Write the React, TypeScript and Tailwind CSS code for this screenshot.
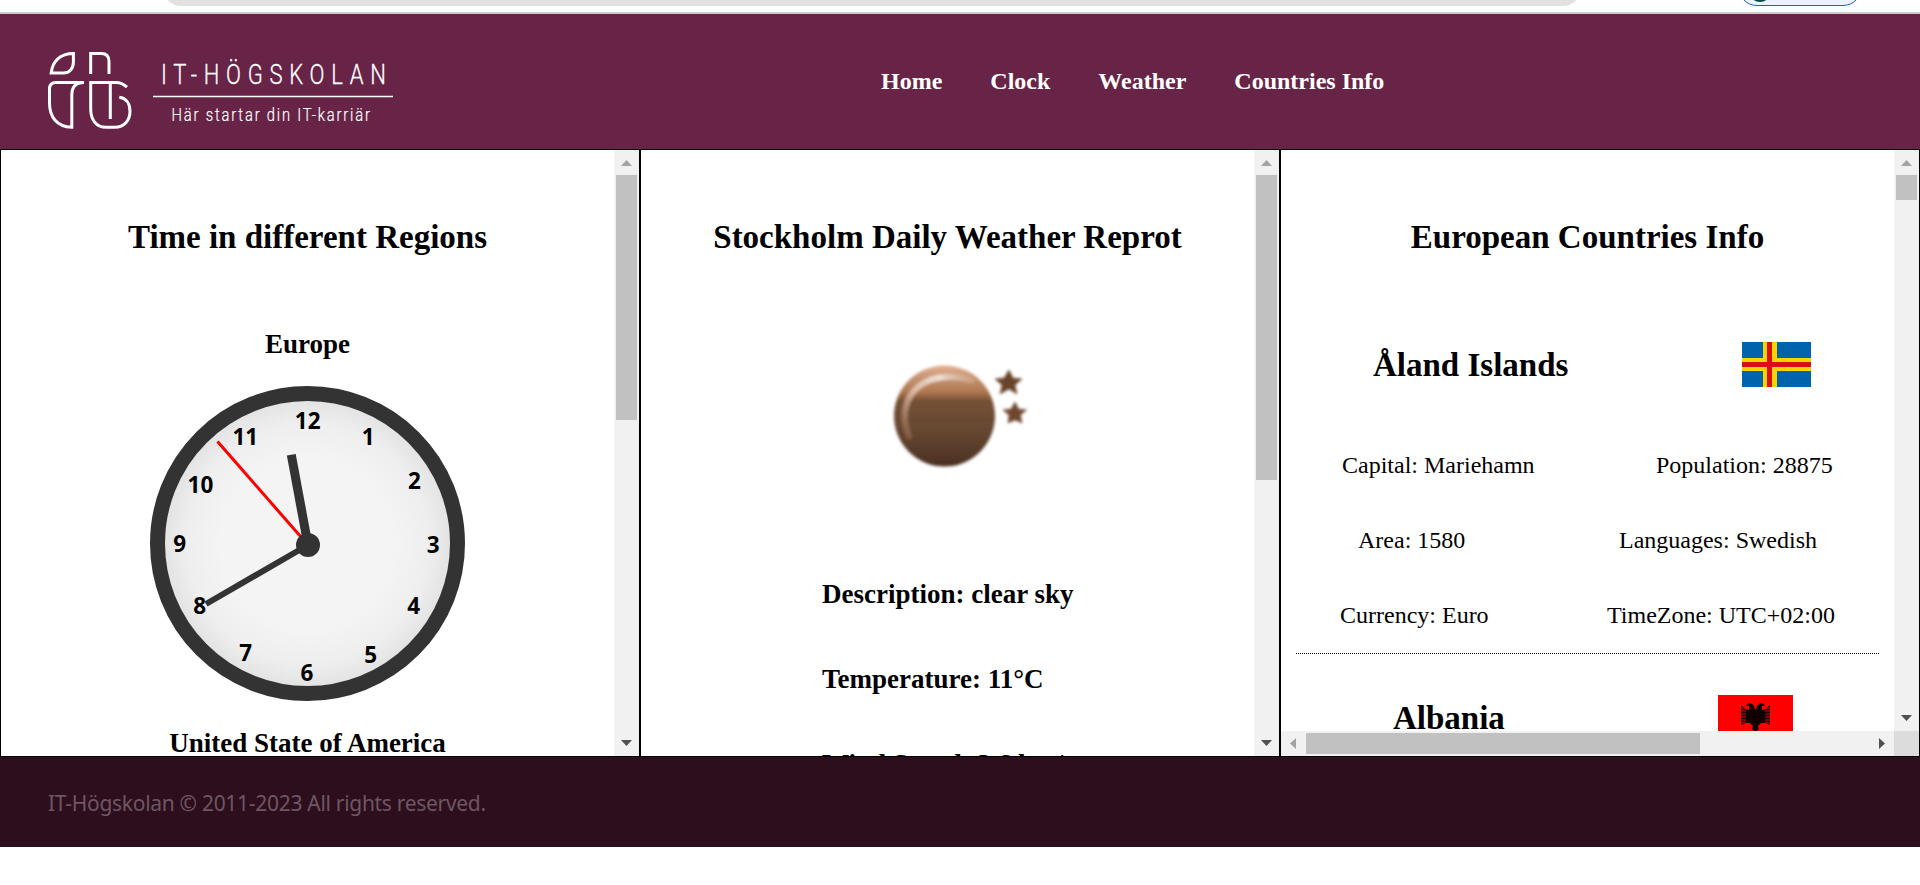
import React from 'react';

const SERIF = "font-['Liberation_Serif','Times_New_Roman',serif]";

type Direction = 'up' | 'down' | 'left' | 'right';

const arrows: Record<Direction, string> = {
  up: '7,16 18,16 12.5,10',
  down: '7,9 18,9 12.5,15',
  left: '15,7 15,18 9,12.5',
  right: '10,7 10,18 16,12.5',
};

function Arrow({ dir, muted = false }: { dir: Direction; muted?: boolean }) {
  return (
    <svg className="block h-[25px] w-[25px] shrink-0" viewBox="0 0 25 25">
      <polygon points={arrows[dir]} fill={muted ? '#a3a3a3' : '#505050'} />
    </svg>
  );
}

function VScroll({ thumb }: { thumb: string }) {
  return (
    <div className="flex w-[25px] shrink-0 flex-col items-center bg-[#f1f1f1]">
      <Arrow dir="up" muted />
      <div className={`w-[21px] bg-[#c1c1c1] ${thumb}`} />
      <div className="grow" />
      <Arrow dir="down" />
    </div>
  );
}

function Logo() {
  return (
    <svg className="block h-[90px] w-[360px]" viewBox="40 45 360 90" fill="none" stroke="#fff" strokeWidth="3">
      <path d="M51.2 73 C52.5 61.5 60 53.5 73.4 53.5 V62 C73.4 68.5 69.5 73 63.5 73 Z" />
      <path d="M90.7 74 V53.5 H101.5 C106.5 53.5 109 56.5 109 61.5 V74" />
      <path d="M84 82.4 H56 C51.5 82.4 49.5 84.5 49.5 89 V103 C49.5 117 57 127 71.8 127.3 V95 C71.8 87 75 82.4 84 82.4" />
      <path d="M127 87.2 C123.5 83.8 121 82.4 116 82.4 H90.7 V109 C90.7 119.5 96 127.3 106 127.3 H115 C124 127.3 130 120.5 130 111.5 C130 103.5 126 98 119.3 97.2" />
      <path d="M110.3 82.4 V119" />
      <path d="M153 96.5 H393" strokeWidth="1.5" />
      <g fill="#fff" stroke="none" fontFamily="Roboto, sans-serif" fontWeight="300">
        <text transform="translate(161 84) scale(.8 1)" fontSize="27.5" textLength="281" lengthAdjust="spacing" stroke="#fff" strokeWidth=".3">IT-HÖGSKOLAN</text>
        <text transform="translate(171.500 121) scale(.82 1)" fontSize="18" textLength="242" lengthAdjust="spacing" stroke="#fff" strokeWidth=".2">Här startar din IT-karriär</text>
      </g>
    </svg>
  );
}

const numerals: [string, number, number][] = [
  ['12', 307.7, 420.7], ['1', 368.3, 436.7], ['2', 414.5, 480.7], ['3', 433.3, 544.6],
  ['4', 413.7, 605.7], ['5', 370.7, 654.6], ['6', 307, 672.7], ['7', 245.7, 652.7],
  ['8', 199.7, 605.7], ['9', 179.7, 543.6], ['10', 200.4, 484.7], ['11', 245.3, 436.7],
];

function Clock() {
  return (
    <svg className="block size-[315px]" viewBox="150 386 315 315">
      <defs>
        <radialGradient id="face">
          <stop offset="0.6" stopColor="#f4f4f4" />
          <stop offset="0.85" stopColor="#eeeeee" />
          <stop offset="1" stopColor="#e3e3e3" />
        </radialGradient>
      </defs>
      <circle cx="307.5" cy="543.5" r="143" fill="url(#face)" />
      <circle cx="307.5" cy="543.5" r="150" fill="none" stroke="#333" strokeWidth="15" />
      <g fontFamily="'Noto Sans', sans-serif" fontWeight="700" fontSize="22.5" textAnchor="middle" fill="#000">
        {numerals.map(([n, x, y]) => (
          <text key={n} x={x} y={y + 8}>{n}</text>
        ))}
      </g>
      <path d="M308 545 L291.3 454.7" stroke="#333" strokeWidth="9" />
      <path d="M308 545 L206 604" stroke="#333" strokeWidth="6" />
      <path d="M308 545 L217.5 441.5" stroke="#f00" strokeWidth="3" />
      <circle cx="308" cy="545" r="12" fill="#333" />
    </svg>
  );
}

function Moon() {
  return (
    <svg className="block h-[150px] w-[180px]" viewBox="870 340 180 150">
      <defs>
        <linearGradient id="moon" x1="0" y1="0" x2="0" y2="1">
          <stop offset="0" stopColor="#e6b08c" />
          <stop offset="0.1" stopColor="#c9997a" />
          <stop offset="0.26" stopColor="#b0784f" />
          <stop offset="0.35" stopColor="#745036" />
          <stop offset="0.65" stopColor="#654630" />
          <stop offset="1" stopColor="#493022" />
        </linearGradient>
        <linearGradient id="rim" x1="0" y1="1" x2="1" y2="0">
          <stop offset="0" stopColor="#a06f50" stopOpacity="0.4" />
          <stop offset="0.45" stopColor="#d9b9a4" />
          <stop offset="0.75" stopColor="#efdfd5" />
          <stop offset="1" stopColor="#d9b9a4" stopOpacity="0.2" />
        </linearGradient>
        <filter id="soft" x="-20%" y="-20%" width="140%" height="140%">
          <feGaussianBlur stdDeviation="1.7" />
        </filter>
      </defs>
      <g filter="url(#soft)">
        <circle cx="944.5" cy="416" r="50.5" fill="url(#moon)" />
        <path d="M910 439 C892 402 920 364 974 381" fill="none" stroke="url(#rim)" strokeWidth="6" />
        <path d="M1009 370 l4 8 9 1 -7 6 2 9 -8 -5 -9 5 2 -9 -7 -6 9 -1z" fill="#68422c" stroke="#8c6852" strokeWidth="1" />
        <path d="M1015 402 l3.500 7 8 1 -6 5 1.500 8 -7 -3 -7 3 1 -8 -6 -5 8 -1z" fill="#70472f" stroke="#8c6852" strokeWidth="1" />
      </g>
    </svg>
  );
}

function AlandFlag() {
  return (
    <svg className="block h-[45px] w-[69px]" viewBox="0 0 69 45">
      <path fill="#0064ad" d="M0 0h69v45H0z" />
      <path fill="#ffd300" d="M21 0h14v45H21zM0 16h69v13H0z" />
      <path fill="#da0e15" d="M25 0h5v45h-5zM0 20h69v5H0z" />
    </svg>
  );
}

function AlbaniaFlag() {
  return (
    <svg className="block h-[54px] w-[75px]" viewBox="0 0 75 54">
      <path fill="#f00" d="M0 0h75v54H0z" />
      <path
        d="M37.500 15 L36 11 33.500 8.500 30 8.500 28 10.500 31 11 31 15 28 14.500 23 10 V30 L28 28 32 28 35 31 34 34 37.500 37 41 34 40 31 43 28 47 28 52 30 V10 L47 14.500 44 15 44 11 47 10.500 45 8.500 41.500 8.500 39 11 Z"
        fill="#100"
      />
      <path d="M22 13h6M22 16h6M22 19h6M22 22h6M22 25h6M22 28h6M47 13h6M47 16h6M47 19h6M47 22h6M47 25h6M47 28h6" stroke="#f00" strokeWidth="0.900" />
    </svg>
  );
}

function InfoRow({ left, right, leftClass }: { left: string; right: string; leftClass: string }) {
  return (
    <div className="mt-[47px] flex h-7 text-2xl leading-7 whitespace-nowrap">
      <div className={`shrink-0 ${leftClass}`}>{left}</div>
      <div>{right}</div>
    </div>
  );
}

const panel = 'flex h-[608px] w-[640px] shrink-0 border border-black bg-white';
const title = 'mt-[68px] h-[38px] text-center text-[33px] font-bold leading-[38px]';

export default function App() {
  return (
    <div className={`h-[885px] w-[1920px] overflow-hidden bg-white text-black ${SERIF}`}>
      <div className="flex h-[14px] items-start overflow-hidden border-b-2 border-[#c8cdca]">
        <div className="-mt-[36px] ml-[161px] h-[42px] w-[1422px] shrink-0 rounded-full bg-[#e1e1e1]" />
        <div className="-mt-[32px] ml-[155px] flex h-[38px] w-[124px] shrink-0 items-end rounded-full border border-[#1a61c8] bg-[#edf3fb] pb-[3px] pl-[10px]">
          <div className="size-[22px] rounded-full bg-[#074d43]" />
        </div>
      </div>

      <header className="flex h-[135px] bg-[#682446]">
        <div className="mt-[31px] ml-10">
          <Logo />
        </div>
        <nav className="mt-[53px] ml-[481px] flex gap-12 text-2xl leading-7 font-bold text-white">
          <a>Home</a>
          <a>Clock</a>
          <a>Weather</a>
          <a>Countries Info</a>
        </nav>
      </header>

      <main className="flex">
        <section className={panel}>
          <div className="flex w-[613px] flex-col items-center overflow-hidden">
            <h1 className={title}>Time in different Regions</h1>
            <h2 className="mt-[73px] h-[30px] shrink-0 text-[27px] leading-[30px] font-bold">Europe</h2>
            <div className="mt-[27px] shrink-0">
              <Clock />
            </div>
            <h2 className="mt-[27px] h-[30px] shrink-0 text-[27px] leading-[30px] font-bold">United State of America</h2>
          </div>
          <VScroll thumb="h-[245px]" />
        </section>

        <section className={panel}>
          <div className="flex w-[613px] flex-col overflow-hidden">
            <h1 className={title}>Stockholm Daily Weather Reprot</h1>
            <div className="mt-[84px] ml-[229px] shrink-0">
              <Moon />
            </div>
            <div className="mt-[89px] ml-[181px] flex shrink-0 flex-col gap-[55px] text-[27px] leading-[30px] font-bold">
              <p>Description: clear sky</p>
              <p>Temperature: 11°C</p>
              <p>Wind Speed: 3.6 km/s</p>
            </div>
          </div>
          <VScroll thumb="h-[305px]" />
        </section>

        <section className={panel}>
          <div className="flex w-[613px] flex-col">
            <div className="flex h-[581px] flex-col overflow-hidden">
              <h1 className={title}>European Countries Info</h1>
              <div className="mt-[86px] flex h-[45px] shrink-0 items-center">
                <h2 className="ml-[92px] w-[369px] text-[33px] leading-[38px] font-bold">Åland Islands</h2>
                <AlandFlag />
              </div>
              <div className="mt-[17px]">
                <InfoRow left="Capital: Mariehamn" right="Population: 28875" leftClass="ml-[61px] w-[314px]" />
                <InfoRow left="Area: 1580" right="Languages: Swedish" leftClass="ml-[77px] w-[261px]" />
                <InfoRow left="Currency: Euro" right="TimeZone: UTC+02:00" leftClass="ml-[59px] w-[267px]" />
              </div>
              <div className="mt-6 ml-[15px] w-[583px] border-t border-dotted border-black" />
              <div className="mt-[41px] flex shrink-0 items-start">
                <h2 className="mt-[4px] ml-[112px] w-[325px] text-[33px] leading-[38px] font-bold">Albania</h2>
                <AlbaniaFlag />
              </div>
            </div>
            <div className="flex h-[25px] items-center bg-[#f1f1f1]">
              <Arrow dir="left" muted />
              <div className="h-[21px] w-[394px] bg-[#c1c1c1]" />
              <div className="grow" />
              <Arrow dir="right" />
            </div>
          </div>
          <div className="flex flex-col">
            <div className="flex h-[581px]">
              <VScroll thumb="h-[25px]" />
            </div>
            <div className="size-[25px] bg-[#dcdcdc]" />
          </div>
        </section>
      </main>

      <footer className="h-[90px] bg-[#2c0e1d] pt-[31px] pl-12 text-[#6f5663]">
        <p className="font-['Noto_Sans',sans-serif] text-[21px] leading-[30px] tracking-[-0.3px]">IT-Högskolan © 2011-2023 All rights reserved.</p>
      </footer>
    </div>
  );
}
